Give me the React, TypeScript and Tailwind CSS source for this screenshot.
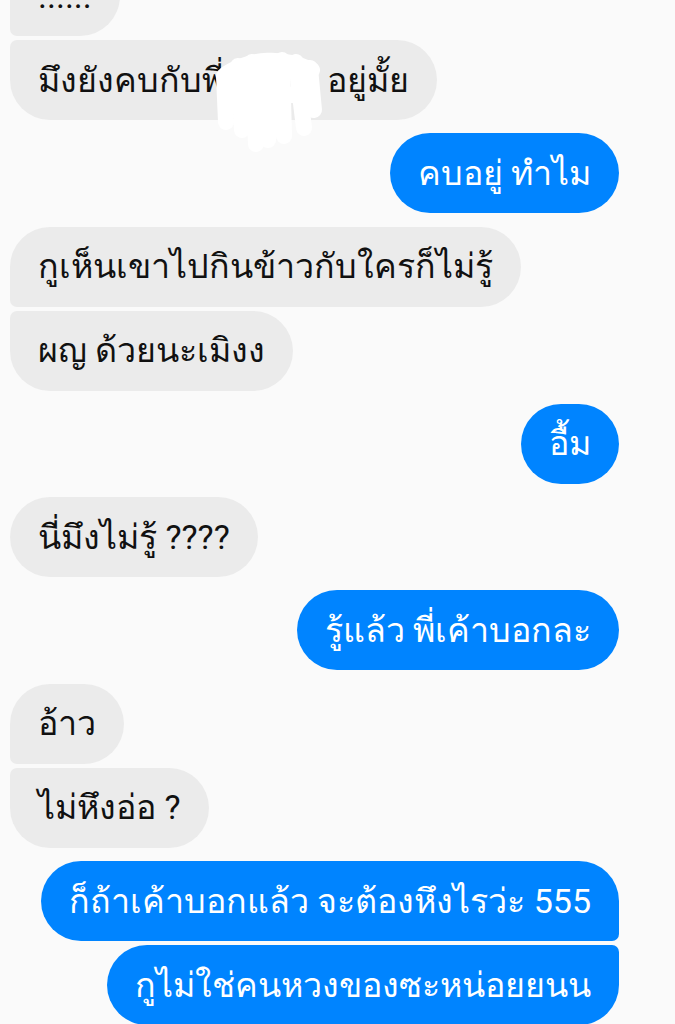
import React from 'react';

type Msg = {
  text: string;
  me: boolean;
  pos: 'single' | 'first' | 'last';
  groupStart?: boolean;
};

const messages: Msg[] = [
  { text: '......', me: false, pos: 'first' },
  { text: 'มึงยังคบกับพี่', me: false, pos: 'last' },
  { text: 'คบอยู่ ทำไม', me: true, pos: 'single', groupStart: true },
  { text: 'กูเห็นเขาไปกินข้าวกับใครก็ไม่รู้', me: false, pos: 'first', groupStart: true },
  { text: 'ผญ ด้วยนะเมิงง', me: false, pos: 'last' },
  { text: 'อื้ม', me: true, pos: 'single', groupStart: true },
  { text: 'นี่มึงไม่รู้ ????', me: false, pos: 'single', groupStart: true },
  { text: 'รู้แล้ว พี่เค้าบอกละ', me: true, pos: 'single', groupStart: true },
  { text: 'อ้าว', me: false, pos: 'first', groupStart: true },
  { text: 'ไม่หึงอ่อ ?', me: false, pos: 'last' },
  { text: 'ก็ถ้าเค้าบอกแล้ว จะต้องหึงไรว่ะ 555', me: true, pos: 'first', groupStart: true },
  { text: 'กูไม่ใช่คนหวงของซะหน่อยยนน', me: true, pos: 'last' },
];

function cornerClass(m: Msg) {
  if (m.me) {
    if (m.pos === 'first') return 'rounded-[40px] rounded-br-[7px]';
    if (m.pos === 'last') return 'rounded-[40px] rounded-tr-[7px]';
    return 'rounded-[40px]';
  }
  if (m.pos === 'first') return 'rounded-[40px] rounded-bl-[7px]';
  if (m.pos === 'last') return 'rounded-[40px] rounded-tl-[7px]';
  return 'rounded-[40px]';
}

// white marker scribble hiding a name
function Scribble() {
  return (
    <svg viewBox="0 0 112 100" className="absolute left-[202px] top-[12px] w-[112px] h-[100px] pointer-events-none">
      <g stroke="#ffffff" strokeWidth="16" strokeLinecap="round" strokeLinejoin="round" fill="none">
        <path d="M12 24 L14 70" />
        <path d="M26 14 L30 78" />
        <path d="M40 10 L44 92" />
        <path d="M56 10 L56 88" />
        <path d="M70 8 L72 84" />
        <path d="M84 10 L92 76" />
        <path d="M98 16 L102 58" />
        <path d="M14 22 C40 6, 70 4, 100 18" />
        <path d="M16 50 C40 40, 70 40, 98 46" />
      </g>
    </svg>
  );
}

function Bubble({ m, scribbled }: { m: Msg; scribbled?: boolean }) {
  return (
    <div className={`flex ${m.me ? 'justify-end' : 'justify-start'} ${m.groupStart ? 'mt-[13.3px]' : 'mt-[4px]'}`}>
      <div
        className={`relative h-[80px] flex items-center px-[28px] whitespace-nowrap text-[34px] ${cornerClass(m)} ${
          m.me ? 'bg-[#0084ff] text-white' : 'bg-[#ebebeb] text-[#111]'
        }`}
      >
        {scribbled ? (
          <span>
            {m.text}
            <span className="inline-block w-[103px]" />
            อยู่มั้ย
          </span>
        ) : (
          <span>{m.text}</span>
        )}
        {scribbled && <Scribble />}
      </div>
    </div>
  );
}

export default function App() {
  return (
    <div
      className="w-[675px] h-[1024px] overflow-hidden bg-[#fafafa] pl-[10px] pr-[56px]"
      style={{ fontFamily: 'Roboto, "Noto Sans", sans-serif' }}
    >
      <div className="flex flex-col -mt-[48px]">
        {messages.map((m, i) => (
          <Bubble key={i} m={m} scribbled={i === 1} />
        ))}
      </div>
    </div>
  );
}
